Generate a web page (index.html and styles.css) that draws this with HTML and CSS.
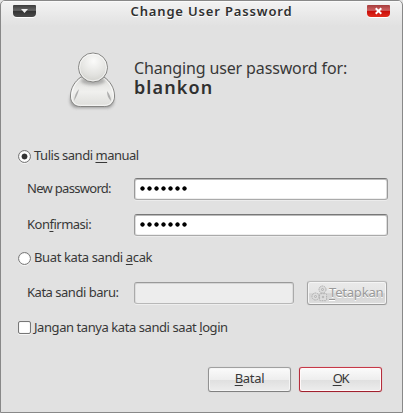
FILE: index.html
```html
<!DOCTYPE html>
<html lang="id">
<head>
<meta charset="utf-8">
<title>Change User Password</title>
<link rel="stylesheet" href="styles.css">
</head>
<body>
<main class="window">
  <header class="titlebar">
    <button class="control menu" aria-label="Menu"><svg width="23" height="12" viewBox="0 0 23 12"><path d="M8 4h7l-3.5 4z" fill="#eee"/></svg></button>
    <h1 class="title">Change User Password</h1>
    <button class="control close" aria-label="Close"><svg width="23" height="12" viewBox="0 0 23 12"><path d="M8.7 3.3l5.600 5.400M14.300 3.300L8.700 8.700" stroke="#fff" stroke-width="1.9"/></svg></button>
  </header>
  <section class="intro">
    <svg class="avatar" width="50" height="62" viewBox="0 0 50 62">
      <defs>
        <radialGradient id="head" cx=".52" cy=".28" r=".75"><stop offset="0" stop-color="#fbfbfa"/><stop offset=".65" stop-color="#e2e2df"/><stop offset="1" stop-color="#cfcfca"/></radialGradient>
        <linearGradient id="body" x1="0" y1="0" x2="0" y2="1"><stop offset="0" stop-color="#dededb"/><stop offset=".5" stop-color="#f0f0ee"/><stop offset="1" stop-color="#ddddda"/></linearGradient>
        <filter id="soft" x="-30%" y="-30%" width="160%" height="160%"><feGaussianBlur stdDeviation="1.4"/></filter>
      </defs>
      <rect x="3" y="42" width="44" height="16" rx="7" fill="#777" opacity=".65" filter="url(#soft)"/>
      <path d="M14 27C8 31 3.500 38 3.500 46c0 6 3.500 10.500 10 10.500h24c6.500 0 10-4.500 10-10.500 0-8-4.500-15-10.500-19z" fill="url(#body)" stroke="#858583"/>
      <path d="M14 28.500C8.500 32.500 4.700 39 4.700 46c0 5.500 3 9.300 8.800 9.300h24c5.800 0 8.800-3.800 8.800-9.300 0-7-3.800-13.500-9.300-17.500" fill="none" stroke="#fff" opacity=".8"/>
      <path d="M12 39c-3 3-4.500 7-5 12 2-4 4-7 5-12zM40 41c0 4 1 7 4 10 0-4-1.500-7-4-10z" fill="#999" opacity=".75"/>
      <ellipse cx="26" cy="31" rx="12" ry="4" fill="#777" opacity=".5" filter="url(#soft)"/>
      <circle cx="26" cy="17.500" r="14.500" fill="url(#head)" stroke="#858583"/>
      <circle cx="26" cy="17.500" r="13.400" fill="none" stroke="#fff" opacity=".65"/>
    </svg>
    <div class="heading"><p class="lead">Changing user password for:</p><p class="name">blankon</p></div>
  </section>
  <form class="form">
    <label class="choice"><span class="radio checked"></span><span class="t1">Tulis sandi <u>m</u>anual</span></label>
    <div class="row"><label class="t2">New password:</label><div class="field"><span class="dots"><i></i><i></i><i></i><i></i><i></i><i></i><i></i></span></div></div>
    <div class="row"><label class="t3">Kon<u>f</u>irmasi:</label><div class="field"><span class="dots"><i></i><i></i><i></i><i></i><i></i><i></i><i></i></span></div></div>
    <label class="choice second"><span class="radio"></span><span class="t4">Buat kata sandi <u>a</u>cak</span></label>
    <div class="row random"><label class="t5">Kata sandi baru:</label><div class="field disabled"></div>
      <button type="button" class="btn apply"><svg width="17" height="17" viewBox="0 0 17 17" fill="#ddd" stroke="#b0b0b0"><g stroke-dasharray="1.800 .7"><circle cx="11.500" cy="4.500" r="3.500"/><circle cx="4.500" cy="11.500" r="3.500"/><rect x="8.600" y="8.700" width="7" height="7" rx="1"/></g><circle cx="11.500" cy="4.500" r="1"/><circle cx="4.500" cy="11.500" r="1"/><circle cx="12" cy="12" r=".8"/></svg><span class="t6"><u>T</u>etapkan</span></button></div>
    <label class="choice last"><span class="check"></span><span class="t7">Jangan tanya kata sandi saat <u>l</u>ogin</span></label>
    <footer class="actions"><button type="button" class="btn"><span class="t8"><u>B</u>atal</span></button><button type="button" class="btn default"><span class="t9"><u>O</u>K</span></button></footer>
  </form>
</main>
</body>
</html>
```
FILE: styles.css
```css
* { box-sizing: border-box; }
body { margin: 0; background: #e4e4e4; font: 13px/18px "Noto Sans", sans-serif; color: #383838; }
h1, p { margin: 0; }
button { font: inherit; color: inherit; padding: 0; }
u { text-decoration: underline; text-decoration-thickness: 1px; text-underline-offset: 2px; text-decoration-skip-ink: none; }
.window { width: 403px; height: 413px; border: 1px solid #888; border-radius: 5px 5px 0 0; background: linear-gradient(#f3f3f3, #e1e1e1 25px); overflow: hidden; }
.titlebar { height: 22px; display: flex; align-items: flex-start; justify-content: space-between; padding: 4px 12px 0; box-shadow: inset 0 1px #fafafa; }
.control { width: 23px; height: 12px; border: 0; border-radius: 1px 1px 4px 4px; display: flex; box-shadow: 0 1px #fff; }
.menu { background: linear-gradient(#3b3b3b, #666 45%, #333 50%, #4b4b4b); }
.close { background: linear-gradient(#a53b3b, #cf6262 45%, #c80d0a 50%, #e12c1c); }
.title { font-size: 13px; line-height: 18px; font-weight: 600; margin: -3px 0 0 20px; letter-spacing: .84px; white-space: nowrap; color: #303030; text-shadow: 0 1px #fff; }
.intro { height: 122px; display: flex; padding: 27px 0 0 66px; }
.avatar { flex: none; margin-top: 0; }
.heading { margin: 8px 0 0 17px; white-space: nowrap; }
.lead { font-size: 16px; line-height: 20px; letter-spacing: -.14px; }
.name { font-size: 18px; line-height: 18px; font-weight: 600; letter-spacing: 1.1px; color: #303030; }
.form { display: flex; flex-direction: column; white-space: nowrap; }
.choice { display: flex; align-items: center; height: 18px; margin: 1px 0 0 17px; gap: 4px; }
.choice > span:last-child { margin-top: -1px; }
.radio, .check { width: 13px; height: 13px; border: 1px solid #777; background: #fff; box-shadow: 0 1px #f6f6f6, inset 0 0 1px #bbb; flex: none; margin-right: -1px; }
.radio { border-radius: 50%; margin-top: 2px; }
.checked { background: radial-gradient(circle, #333 0 2.6px, #fff 3.3px); }
.check { border-radius: 2px; margin-top: 1px; }
.row { display: flex; align-items: center; height: 22px; margin: 14px 14px 0 26px; }
.row label { width: 107px; flex: none; margin-top: -2px; }
.field { flex: 1; height: 22px; border: 1px solid; border-color: #777 #999 #aaa; border-radius: 3px; background: #fff; box-shadow: inset 0 1px #bbb, inset 1px 0 #ddd, inset -1px 0 #ddd, inset 0 -1px #eee, 0 1px #ececec; display: flex; align-items: center; padding-left: 5px; }
.dots { display: flex; gap: 2px; margin-top: -2px; }
.dots i { width: 5px; height: 5px; background: radial-gradient(circle, #000 1.8px, transparent 2.5px); }
.second { margin-top: 12px; }
.choice + .random { margin-top: 16px; }
.disabled { flex: 0 0 160px; background: #ededed; border-color: #999 #aaa #b8b8b8; box-shadow: inset 0 1px #d5d5d5, inset 1px 0 #ddd, inset -1px 0 #ddd, 0 1px #eee; }
.btn { width: 83px; height: 25px; border: 1px solid; border-color: #a0a0a0 #929292 #808080; border-radius: 3px; background: linear-gradient(#fbfbfb, #eee 50%, #e0e0e0 53%, #ededed); box-shadow: inset 0 0 0 1px #f5f5f5, 0 0 1px #bbb; display: flex; align-items: center; justify-content: center; line-height: 18px; }
.btn span { margin-top: -3px; }
.default { border-color: #c63848 #b52d3c #a0202e; box-shadow: inset 0 0 0 1px #fff8f8, 0 0 1px #d77; }
.apply { width: 80px; height: 24px; margin-left: 13px; border-color: #bbb #a5a5a5 #999; color: #999; justify-content: flex-start; padding-left: 3px; background: linear-gradient(#eaeaea, #e4e4e4 50%, #d3d3d3 53%, #ddd); }
.apply svg { flex: none; }
.apply span { margin-left: 1px; text-shadow: 0 1px #fff; }
.last { margin-top: 14px; }
.actions { display: flex; justify-content: flex-end; gap: 8px; padding: 31px 20px 0 0; }
.t1 { letter-spacing: -.48px; }
.t2 { letter-spacing: -.7px; }
.t3 { letter-spacing: -.5px; }
.t4 { letter-spacing: -.37px; }
.t5 { letter-spacing: -.48px; }
.t6 { letter-spacing: -.2px; }
.t7 { letter-spacing: -.43px; }
.t8 { letter-spacing: -.3px; }
.t9 { letter-spacing: -1.3px; }
```
